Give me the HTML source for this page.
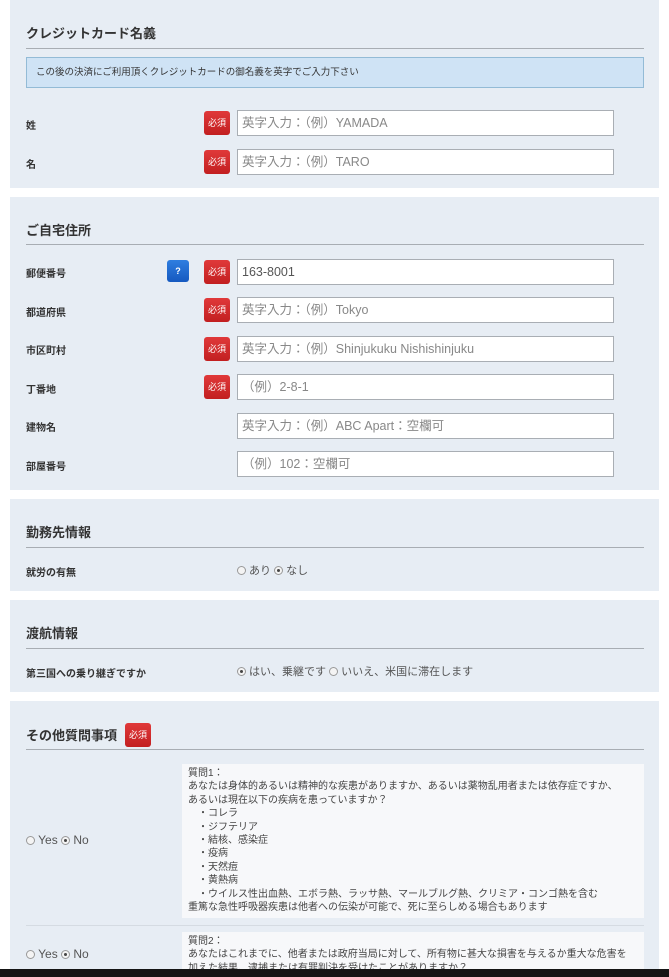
<!DOCTYPE html>
<html><head><meta charset="utf-8"><style>
*{margin:0;padding:0;box-sizing:border-box}
html,body{width:669px;height:977px;overflow:hidden}
body{background:#fff;position:relative;font-family:"Liberation Sans","Noto Sans CJK JP",sans-serif;color:#333}
.p{position:absolute;left:10px;width:649px;background:#e7edf4;overflow:hidden}
.a{position:absolute}
.t{position:absolute;left:16px;font-size:13px;font-weight:bold;color:#333}
.ln{position:absolute;left:16px;width:618px;height:1px;background:#a8adb3}
.lb{position:absolute;left:16px;font-size:10px;font-weight:bold;color:#333}
.b{position:absolute;width:26px;height:24px;background:linear-gradient(#e0393a,#c21f20);border-radius:3px;color:#fff;font-size:9px;text-align:center;line-height:24px}
.in{position:absolute;left:227px;width:377px;height:26px;background:#fff;border:1px solid #a9aeb4;font-size:12.5px;color:#888;padding-left:4px;line-height:24px}
.r{font-size:11px;color:#555}
.c{display:inline-block;width:9px;height:9px;border:1px solid #999;border-radius:50%;background:#f4f4f4;vertical-align:-1px;position:relative}
.c.on::after{content:"";position:absolute;left:2px;top:2px;width:3px;height:3px;border-radius:50%;background:#444}
.q{position:absolute;left:172px;width:462px;background:#f7f8fa;font-size:10px;line-height:13.4px;color:#444;padding:3px 6px;overflow:hidden}
</style></head><body>
<div class="p" style="top:0;height:188px">
 <div class="t" style="top:23px">クレジットカード名義</div>
 <div class="ln" style="top:48px"></div>
 <div class="a" style="left:16px;top:57px;width:618px;height:31px;background:#cfe3f5;border:1px solid #93bbd6;font-size:9.5px;line-height:29px;padding-left:9px">この後の決済にご利用頂くクレジットカードの御名義を英字でご入力下さい</div>
 <div class="lb" style="top:117px">姓</div><div class="b" style="left:194px;top:111px">必須</div><div class="in" style="top:110px">英字入力：（例）YAMADA</div>
 <div class="lb" style="top:156px">名</div><div class="b" style="left:194px;top:150px">必須</div><div class="in" style="top:149px">英字入力：（例）TARO</div>
</div>
<div class="p" style="top:197px;height:293px">
 <div class="t" style="top:23px">ご自宅住所</div>
 <div class="ln" style="top:47px"></div>
 <div class="lb" style="top:68px">郵便番号</div><div class="b" style="left:157px;top:63px;width:22px;height:22px;line-height:22px;background:linear-gradient(#2f7ee0,#1559c0);font-weight:bold">?</div><div class="b" style="left:194px;top:63px">必須</div><div class="in" style="top:62px;color:#555">163-8001</div>
 <div class="lb" style="top:107px">都道府県</div><div class="b" style="left:194px;top:101px">必須</div><div class="in" style="top:100px">英字入力：（例）Tokyo</div>
 <div class="lb" style="top:145px">市区町村</div><div class="b" style="left:194px;top:140px">必須</div><div class="in" style="top:139px">英字入力：（例）Shinjukuku Nishishinjuku</div>
 <div class="lb" style="top:184px">丁番地</div><div class="b" style="left:194px;top:178px">必須</div><div class="in" style="top:177px">（例）2-8-1</div>
 <div class="lb" style="top:222px">建物名</div><div class="in" style="top:216px">英字入力：（例）ABC Apart：空欄可</div>
 <div class="lb" style="top:261px">部屋番号</div><div class="in" style="top:254px">（例）102：空欄可</div>
</div>
<div class="p" style="top:499px;height:92px">
 <div class="t" style="top:23px">勤務先情報</div>
 <div class="ln" style="top:48px"></div>
 <div class="lb" style="top:65px">就労の有無</div>
 <div class="a r" style="left:227px;top:63px"><span class="c"></span> あり <span class="c on"></span> なし</div>
</div>
<div class="p" style="top:600px;height:92px">
 <div class="t" style="top:23px">渡航情報</div>
 <div class="ln" style="top:48px"></div>
 <div class="lb" style="top:65px">第三国への乗り継ぎですか</div>
 <div class="a r" style="left:227px;top:63px"><span class="c on"></span> はい、乗継です <span class="c"></span> いいえ、米国に滞在します</div>
</div>
<div class="p" style="top:701px;height:276px">
 <div class="t" style="top:24px">その他質問事項</div><div class="b" style="left:115px;top:22px">必須</div>
 <div class="ln" style="top:48px"></div>
 <div class="a r" style="left:16px;top:132px;font-size:12px"><span class="c"></span> Yes <span class="c on"></span> No</div>
 <div class="q" style="top:63px;height:154px">質問1：<br>あなたは身体的あるいは精神的な疾患がありますか、あるいは薬物乱用者または依存症ですか、<br>あるいは現在以下の疾病を患っていますか？<br>　・コレラ<br>　・ジフテリア<br>　・結核、感染症<br>　・疫病<br>　・天然痘<br>　・黄熱病<br>　・ウイルス性出血熱、エボラ熱、ラッサ熱、マールブルグ熱、クリミア・コンゴ熱を含む<br>重篤な急性呼吸器疾患は他者への伝染が可能で、死に至らしめる場合もあります</div>
 <div class="a" style="left:16px;top:224px;width:618px;height:1px;background:#d5dbe2"></div>
 <div class="a r" style="left:16px;top:246px;font-size:12px"><span class="c"></span> Yes <span class="c on"></span> No</div>
 <div class="q" style="top:231px;height:60px;white-space:nowrap">質問2：<br>あなたはこれまでに、他者または政府当局に対して、所有物に甚大な損害を与えるか重大な危害を<br>加えた結果、逮捕または有罪判決を受けたことがありますか？</div>
</div>
<div class="a" style="left:0;top:969px;width:669px;height:8px;background:#151515"></div>
</body></html>
